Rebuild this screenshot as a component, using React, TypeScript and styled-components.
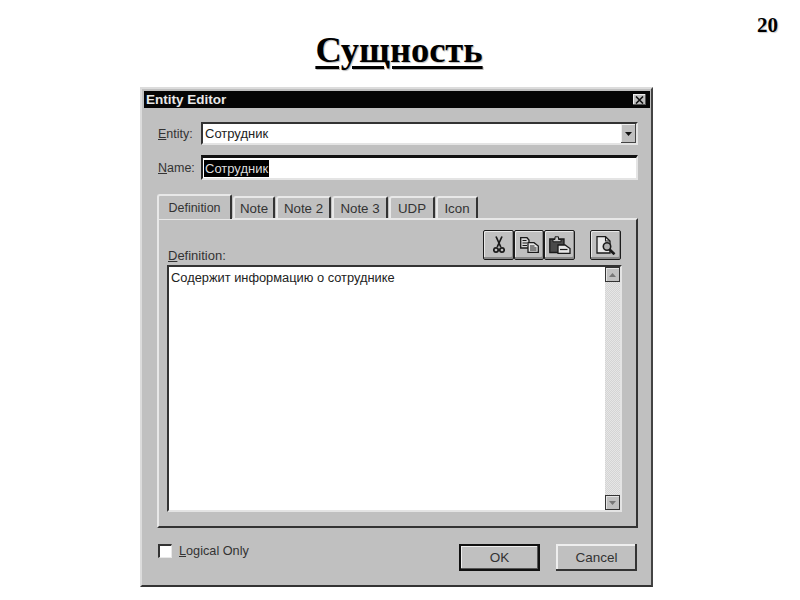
import React from "react";
import styled, { createGlobalStyle } from "styled-components";

const GlobalStyle = createGlobalStyle`
  html, body { margin: 0; padding: 0; background: #fff; }
  body { width: 800px; height: 600px; overflow: hidden; }
`;

const Slide = styled.div`
  width: 800px;
  height: 600px;
  box-sizing: border-box;
  position: relative;
  display: flex;
  flex-direction: column;
  align-items: center;
`;

const PageNumber = styled.div`
  position: absolute;
  top: 13px;
  right: 22px;
  font: bold 21px "Liberation Serif", serif;
  color: #000;
  text-shadow: 1px 1px 1px #ccc;
`;

const Title = styled.h1`
  margin: 29px 2px 0 0;
  height: 58px;
  font: bold 36.5px/42px "Liberation Serif", serif;
  color: #000;
  text-decoration: underline;
  text-decoration-thickness: 3px;
  text-underline-offset: 4px;
  text-shadow: 1px 1px 1px #bbb;
`;

const Dialog = styled.div`
  width: 513px;
  height: 500px;
  box-sizing: border-box;
  align-self: flex-start;
  margin-left: 140px;
  background: #c0c0c0;
  border-top: 2px solid #dcdcdc;
  border-left: 2px solid #dcdcdc;
  border-right: 2px solid #444;
  border-bottom: 2px solid #333;
  padding: 2px 1px 0 2px;
  display: flex;
  flex-direction: column;
  font-family: "Liberation Sans", sans-serif;
  font-size: 13px;
  color: #222;
`;

const TitleBar = styled.div`
  height: 17px;
  background: #050505;
  color: #e8e8e8;
  font-weight: bold;
  font-size: 13.5px;
  line-height: 17px;
  padding: 0 4px 0 2px;
  display: flex;
  justify-content: space-between;
  align-items: center;
`;

const CloseButton = styled.div`
  width: 13px;
  height: 11px;
  background: #c0c0c0;
  box-shadow: inset -1px -1px 0 #555, inset 1px 1px 0 #eee;
  display: flex;
  align-items: center;
  justify-content: center;
`;

const Body = styled.div`
  flex: 1;
  display: flex;
  flex-direction: column;
  padding: 14px 12px 0 13px;
`;

const FieldRow = styled.div<{ $mb: number }>`
  display: flex;
  align-items: center;
  margin-bottom: ${({ $mb }) => $mb}px;
`;

const Label = styled.label`
  width: 44px;
  box-sizing: border-box;
  padding-left: 1px;
  flex: none;
  font-size: 12.5px;
  color: #333;
`;

const Key = styled.span`
  text-decoration: underline;
`;

const Combo = styled.div`
  flex: 1;
  height: 23px;
  box-sizing: border-box;
  background: #fff;
  border-top: 2px solid #333;
  border-left: 2px solid #333;
  border-right: 2px solid #e4e4e4;
  border-bottom: 2px solid #e4e4e4;
  display: flex;
  align-items: center;
  justify-content: space-between;
  padding-left: 2px;
  font-size: 13px;
`;

const ComboArrow = styled.div`
  width: 15px;
  height: 19px;
  background: #c0c0c0;
  box-shadow: inset -1px -1px 0 #444, inset 1px 1px 0 #eee;
  display: flex;
  align-items: center;
  justify-content: center;
`;

const NameInput = styled.div`
  flex: 1;
  height: 25px;
  box-sizing: border-box;
  background: #fff;
  border-top: 3px solid #111;
  border-left: 2px solid #222;
  border-right: 2px solid #e4e4e4;
  border-bottom: 2px solid #e4e4e4;
  display: flex;
  align-items: center;
  padding-left: 1px;
  font-size: 13px;
`;

const Selected = styled.span`
  background: #000;
  color: #ddd;
  padding: 0 1px;
  line-height: 17px;
`;

const TabStrip = styled.div`
  display: flex;
  height: 24px;
  align-items: flex-end;
  position: relative;
  z-index: 1;
`;

const Tab = styled.div<{ $active?: boolean; $w: number }>`
  width: ${({ $w }) => $w}px;
  height: ${({ $active }) => ($active ? 25 : 22)}px;
  margin-bottom: ${({ $active }) => ($active ? -1 : 0)}px;
  box-sizing: border-box;
  background: #c0c0c0;
  border-top: 2px solid #e8e8e8;
  border-left: 2px solid #e8e8e8;
  border-right: 2px solid #333;
  border-radius: 3px 2px 0 0;
  margin-right: 1px;
  display: flex;
  align-items: center;
  justify-content: center;
  font-size: ${({ $active }) => ($active ? 12.5 : 13.3)}px;
  color: #333;
`;

const Panel = styled.div`
  width: 481px;
  height: 310px;
  box-sizing: border-box;
  border-top: 2px solid #e8e8e8;
  border-left: 2px solid #e8e8e8;
  border-right: 2px solid #333;
  border-bottom: 2px solid #333;
  padding: 11px 14px 14px 8px;
  display: flex;
  flex-direction: column;
`;

const PanelHead = styled.div`
  height: 34px;
  display: flex;
  align-items: flex-end;
  justify-content: space-between;
`;

const DefinitionLabel = styled.span`
  font-size: 13px;
  color: #333;
  line-height: 14px;
  margin: 0 0 2px 1px;
`;

const Tools = styled.div`
  display: flex;
  align-items: flex-start;
  align-self: flex-start;
  gap: 15px;
  margin: -1px 1px 0 0;
`;

const ToolGroup = styled.div`
  display: flex;
`;

const ToolButton = styled.div<{ $w: number }>`
  width: ${({ $w }) => $w}px;
  height: 30px;
  box-sizing: border-box;
  background: #c0c0c0;
  border: 1px solid #1c1c1c;
  border-radius: 2px;
  box-shadow: inset -1px -2px 0 #8a8a8a, inset 1px 1px 0 #e8e8e8;
  display: flex;
  align-items: center;
  justify-content: center;
`;

const TextArea = styled.div`
  flex: 1;
  box-sizing: border-box;
  background: #fff;
  border-top: 2px solid #333;
  border-left: 2px solid #333;
  border-right: 2px solid #e4e4e4;
  border-bottom: 2px solid #e4e4e4;
  display: flex;
  justify-content: space-between;
`;

const Content = styled.div`
  padding: 3px 2px;
  font-size: 12.85px;
  line-height: 15px;
  color: #222;
`;

const Scrollbar = styled.div`
  width: 15px;
  display: flex;
  flex-direction: column;
  background: repeating-conic-gradient(#d4d4d4 0 25%, #e6e6e6 0 50%) 0 0 / 2px 2px;
`;

const ScrollButton = styled.div`
  height: 15px;
  box-sizing: border-box;
  background: #c0c0c0;
  border: 1px solid #333;
  box-shadow: inset 1px 1px 0 #e4e4e4;
  display: flex;
  align-items: center;
  justify-content: center;
`;

const ScrollTrack = styled.div`
  flex: 1;
`;

const Footer = styled.div`
  flex: 1;
  display: flex;
  justify-content: space-between;
  padding-left: 1px;
  padding-top: 16px;
  width: 480px;
  box-sizing: border-box;
`;

const CheckRow = styled.div`
  display: flex;
  align-items: flex-start;
  gap: 7px;
  height: 16px;
  font-size: 12.7px;
  line-height: 15px;
  color: #333;
`;

const CheckBox = styled.div`
  width: 14px;
  height: 14px;
  box-sizing: border-box;
  background: #fff;
  border-top: 2px solid #333;
  border-left: 2px solid #333;
  border-right: 1px solid #e8e8e8;
  border-bottom: 1px solid #e8e8e8;
`;

const Buttons = styled.div`
  display: flex;
  gap: 16px;
`;

const PushButton = styled.div<{ $default?: boolean }>`
  width: 81px;
  height: 27px;
  box-sizing: border-box;
  background: #c0c0c0;
  border: ${({ $default }) => ($default ? "2px solid #111" : "0")};
  box-shadow: ${({ $default }) =>
    $default
      ? "inset -1px -1px 0 #555, inset 1px 1px 0 #eee"
      : "inset -2px -2px 0 #333, inset 2px 2px 0 #eee"};
  display: flex;
  align-items: center;
  justify-content: center;
  font-size: 13.5px;
  color: #333;
`;

const ScissorsIcon = () => (
  <svg width="12" height="18" viewBox="0 0 12 18" fill="none" stroke="#1a1a1a" strokeWidth="1.7">
    <path d="M3 0.5 L7.8 11 M9 0.5 L4.2 11" />
    <circle cx="3" cy="14" r="2.2" />
    <circle cx="9" cy="14" r="2.2" />
  </svg>
);

const CopyIcon = () => (
  <svg width="19" height="16" viewBox="0 0 19 16" stroke="#1a1a1a" strokeWidth="1.3">
    <path d="M0.7 0.7 H7 L9 3 V11 H0.7 Z" fill="#d8d8d8" />
    <path d="M2.5 3.5 H6.5 M2.5 6 H7 M2.5 8.5 H7" strokeWidth="1.1" />
    <path d="M8 5.7 H14 L18.3 9 V15.3 H8 Z" fill="#e6e6e6" />
    <path d="M10 9 H14.5 M10 11 H16.5 M10 13 H16.5" strokeWidth="1.1" />
  </svg>
);

const PasteIcon = () => (
  <svg width="22" height="18" viewBox="0 0 22 18">
    <path d="M0.8 3 H15 V16.5 H0.8 Z" fill="#4a4a4a" stroke="#1a1a1a" strokeWidth="1.3" />
    <path d="M4 3.5 H6 V0.8 H9.5 V3.5 H12 V5.8 H4 Z" fill="#c8c8c8" stroke="#1a1a1a" />
    <path d="M9 9 H16 L21 12.5 V17.3 H9 Z" fill="#e6e6e6" stroke="#1a1a1a" strokeWidth="1.3" />
    <path d="M11 13.5 H18.5" stroke="#1a1a1a" strokeWidth="1.2" />
  </svg>
);

const PreviewIcon = () => (
  <svg width="20" height="19" viewBox="0 0 20 19" fill="none" stroke="#1a1a1a">
    <path d="M1 0.7 H9.5 L14 5 V17 H1 Z" fill="#e8e8e8" strokeWidth="1.3" />
    <path d="M9.5 0.7 V5 H14" strokeWidth="1.1" />
    <circle cx="11" cy="10.5" r="3.7" fill="#b0b0b0" strokeWidth="1.6" />
    <path d="M13.5 13.5 L18.5 18.3" strokeWidth="2.6" />
  </svg>
);

const tabs = [
  { label: "Definition", w: 75, active: true },
  { label: "Note", w: 42 },
  { label: "Note 2", w: 55 },
  { label: "Note 3", w: 56 },
  { label: "UDP", w: 46 },
  { label: "Icon", w: 42 },
];

const App: React.FC = () => {
  return (
    <Slide>
      <GlobalStyle />
      <PageNumber>20</PageNumber>
      <Title>Сущность</Title>
      <Dialog>
        <TitleBar>
          Entity Editor
          <CloseButton>
            <svg width="9" height="8" viewBox="0 0 9 8" stroke="#111" strokeWidth="1.6">
              <path d="M1 0.5 L8 7.5 M8 0.5 L1 7.5" />
            </svg>
          </CloseButton>
        </TitleBar>
        <Body>
          <FieldRow $mb={10}>
            <Label><Key>E</Key>ntity:</Label>
            <Combo>
              Сотрудник
              <ComboArrow>
                <svg width="7" height="4" viewBox="0 0 7 4"><path d="M0 0 H7 L3.5 4 Z" fill="#111" /></svg>
              </ComboArrow>
            </Combo>
          </FieldRow>
          <FieldRow $mb={14}>
            <Label><Key>N</Key>ame:</Label>
            <NameInput>
              <Selected>Сотрудник</Selected>
            </NameInput>
          </FieldRow>
          <TabStrip>
            {tabs.map((t) => (
              <Tab key={t.label} $active={t.active} $w={t.w}>{t.label}</Tab>
            ))}
          </TabStrip>
          <Panel>
            <PanelHead>
              <DefinitionLabel><Key>D</Key>efinition:</DefinitionLabel>
              <Tools>
                <ToolGroup>
                  <ToolButton $w={31}><ScissorsIcon /></ToolButton>
                  <ToolButton $w={30}><CopyIcon /></ToolButton>
                  <ToolButton $w={31}><PasteIcon /></ToolButton>
                </ToolGroup>
                <ToolButton $w={31}><PreviewIcon /></ToolButton>
              </Tools>
            </PanelHead>
            <TextArea>
              <Content>Содержит информацию о сотруднике</Content>
              <Scrollbar>
                <ScrollButton>
                  <svg width="7" height="4" viewBox="0 0 7 4"><path d="M3.5 0 L7 4 H0 Z" fill="#777" /></svg>
                </ScrollButton>
                <ScrollTrack />
                <ScrollButton>
                  <svg width="7" height="4" viewBox="0 0 7 4"><path d="M0 0 H7 L3.5 4 Z" fill="#777" /></svg>
                </ScrollButton>
              </Scrollbar>
            </TextArea>
          </Panel>
          <Footer>
            <CheckRow>
              <CheckBox />
              <span><Key>L</Key>ogical Only</span>
            </CheckRow>
            <Buttons>
              <PushButton $default>OK</PushButton>
              <PushButton>Cancel</PushButton>
            </Buttons>
          </Footer>
        </Body>
      </Dialog>
    </Slide>
  );
};

export default App;
